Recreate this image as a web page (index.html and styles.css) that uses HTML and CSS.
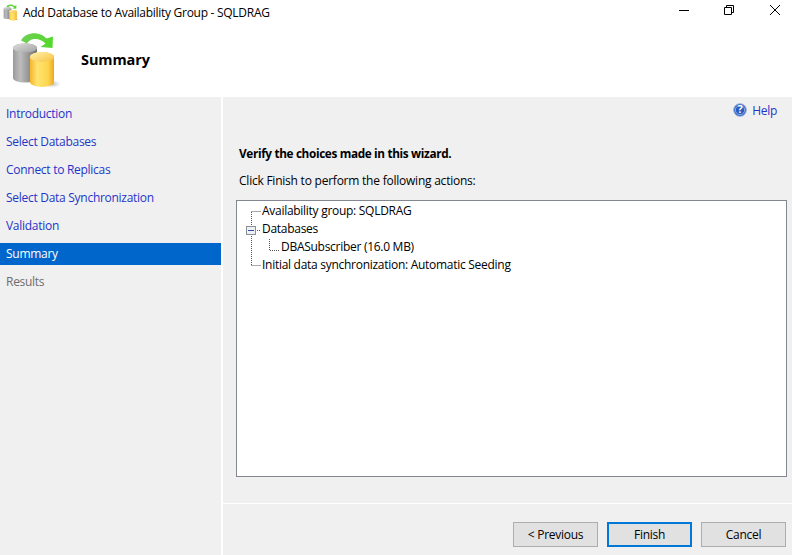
FILE: index.html
```html
<!DOCTYPE html>
<html lang="en">
<head>
<meta charset="utf-8">
<title>Add Database to Availability Group - SQLDRAG</title>
<link rel="stylesheet" href="styles.css">
</head>
<body>
<div class="window">
  <div class="titlebar">
    <svg class="title-icon" width="16" height="17" viewBox="0 0 16 17">
      <use href="#dbicon" width="16" height="17"/>
    </svg>
    <span class="title-text">Add Database to Availability Group - SQLDRAG</span>
    <div class="controls">
      <svg class="ctl" width="46" height="21" viewBox="0 0 46 21"><path d="M18 10.500h10" stroke="#000" fill="none"/></svg>
      <svg class="ctl" width="45" height="21" viewBox="0 0 45 21"><path d="M17.500 7.500h7v7h-7zM19.500 7.500v-2h7v7h-2" stroke="#000" fill="none"/></svg>
      <svg class="ctl" width="40" height="21" viewBox="0 0 40 21"><path d="M18 5l10 10M28 5L18 15" stroke="#000" fill="none"/></svg>
    </div>
  </div>
  <div class="header">
    <svg class="header-icon" width="56" height="65" viewBox="0 0 56 65">
      <defs>
        <linearGradient id="grey" x1="0" x2="1" y1="0" y2="0">
          <stop offset="0" stop-color="#9a9a9a"/><stop offset=".3" stop-color="#bdbdbd"/><stop offset="1" stop-color="#6e6e6e"/>
        </linearGradient>
        <linearGradient id="greyTop" x1="0" x2="1" y1="0" y2="1">
          <stop offset="0" stop-color="#dcdcdc"/><stop offset="1" stop-color="#a2a2a2"/>
        </linearGradient>
        <linearGradient id="yel" x1="0" x2="1" y1="0" y2="0">
          <stop offset="0" stop-color="#f4b52c"/><stop offset=".3" stop-color="#ffe470"/><stop offset=".75" stop-color="#fdd54e"/><stop offset="1" stop-color="#eda81f"/>
        </linearGradient>
        <linearGradient id="yelTop" x1="0" x2="1" y1="0" y2="1">
          <stop offset="0" stop-color="#fff1b0"/><stop offset="1" stop-color="#f8c23c"/>
        </linearGradient>
        <linearGradient id="grn" x1="0" x2="1" y1="0" y2="0">
          <stop offset="0" stop-color="#6fce55"/><stop offset="1" stop-color="#53d92a"/>
        </linearGradient>
        <radialGradient id="shadow">
          <stop offset="0" stop-color="#999" stop-opacity=".7"/><stop offset="1" stop-color="#bbb" stop-opacity="0"/>
        </radialGradient>
        <symbol id="dbicon" viewBox="11 32 50 57" preserveAspectRatio="none">
          <ellipse cx="52" cy="84" rx="9" ry="4" fill="url(#shadow)"/>
          <path d="M13 48a12 4.500 0 0 1 24 0v30a12 4.500 0 0 1-24 0z" fill="url(#grey)"/>
          <ellipse cx="25" cy="48" rx="12" ry="4.500" fill="url(#greyTop)"/>
          <path d="M30 57a12 5 0 0 1 24 0v25a12 5 0 0 1-24 0z" fill="url(#yel)"/>
          <ellipse cx="42" cy="57" rx="12" ry="5" fill="url(#yelTop)"/>
          <path d="M21 40.500C24 35 31 32.500 37 33.500C41 34 44 36 46.500 38.500L53 36.500L52.500 48L40.500 47L45.500 43.500C42 40 38 38.500 34 39C31 39.500 28.500 41 27 43.500z" fill="url(#grn)"/>
        </symbol>
      </defs>
      <use href="#dbicon" x="3" y="4" width="50" height="57"/>
    </svg>
    <h1 class="page-title">Summary</h1>
  </div>
  <div class="wizard">
    <nav class="sidebar">
      <a class="step">Introduction</a>
      <a class="step">Select Databases</a>
      <a class="step">Connect to Replicas</a>
      <a class="step">Select Data Synchronization</a>
      <a class="step">Validation</a>
      <a class="step active">Summary</a>
      <a class="step disabled">Results</a>
    </nav>
    <main class="main">
      <div class="help-row">
        <svg class="help-icon" width="14" height="14" viewBox="0 0 15 15">
          <circle cx="7.500" cy="7.500" r="6.800" fill="#2f62c4" stroke="#9db4dd"/>
          <circle cx="7.500" cy="7.500" r="5" fill="#2a5cc0" stroke="#dbe6f7" stroke-width=".6"/>
          <text x="7.500" y="11" class="help-q">?</text>
        </svg>
        <a class="help-link">Help</a>
      </div>
      <div class="content">
        <p class="verify">Verify the choices made in this wizard.</p>
        <p class="click">Click Finish to perform the following actions:</p>
        <div class="tree">
          <svg class="tree-lines" width="60" height="80" viewBox="0 0 60 80">
            <path d="M14.500 11v54M14.500 10.500h9M20 29.500h4M32.500 38v11.500h10M14.500 64.500h9" stroke="#555" stroke-dasharray="1 1" fill="none"/>
            <rect x="9.500" y="25.500" width="9" height="8" fill="#eef0f6" stroke="#8a8f99"/>
            <path d="M11 29.500h6" stroke="#2b4ea0"/>
          </svg>
          <div class="node">Availability group: SQLDRAG</div>
          <div class="node">Databases</div>
          <div class="node child">DBASubscriber (16.0 MB)</div>
          <div class="node">Initial data synchronization: Automatic Seeding</div>
        </div>
      </div>
      <div class="footer">
        <button class="btn">&lt; Previous</button>
        <button class="btn primary">Finish</button>
        <button class="btn">Cancel</button>
      </div>
    </main>
  </div>
</div>
</body>
</html>
```
FILE: styles.css
```css
* { box-sizing: border-box; }
html, body { margin: 0; padding: 0; }
body {
  font-family: "Open Sans", "Noto Sans", "Liberation Sans", sans-serif;
  font-size: 12px;
  letter-spacing: -0.28px;
  color: #000;
  background: #fff;
}
.window {
  width: 792px;
  height: 555px;
  display: flex;
  flex-direction: column;
  overflow: hidden;
}
.titlebar {
  height: 24px;
  display: flex;
  align-items: center;
  padding-left: 3px;
  flex: none;
}
.title-icon { flex: none; margin-right: 4px; }
.title-text { flex: 1; white-space: nowrap; }
.controls { display: flex; align-self: flex-start; }
.ctl { display: block; }
.header {
  height: 73px;
  flex: none;
  display: flex;
  align-items: center;
}
.header-icon { flex: none; margin: 0 17px 0 8px; }
.page-title { margin: 0; font-size: 14.500px; font-weight: 700; position: relative; top: -1px; letter-spacing: -0.1px; }
.wizard { flex: 1; display: flex; min-height: 0; }
.sidebar {
  width: 221px;
  flex: none;
  margin-right: 2px;
  background: #f0f0f0;
  padding-top: 6px;
  display: flex;
  flex-direction: column;
  gap: 6px;
}
.step {
  height: 22px;
  line-height: 22px;
  padding-left: 6px;
  color: #1f35c8;
}
.step.active { background: #0066cc; color: #fff; }
.step.disabled { color: #6d6d6d; }
.main {
  flex: 1;
  background: #f0f0f0;
  display: flex;
  flex-direction: column;
  min-width: 0;
}
.help-row {
  height: 26px;
  flex: none;
  display: flex;
  justify-content: flex-end;
  align-items: center;
  gap: 5px;
  padding-right: 15px;
}
.help-icon { display: block; }
.help-q { font-size: 11px; font-weight: 700; fill: #fff; text-anchor: middle; }
.help-link { color: #1f35c8; }
.content { flex: 1; padding: 0 5px 0 16px; min-height: 0; }
.verify { margin: 22px 0 0; line-height: 16px; font-size: 11.800px; font-weight: 700; letter-spacing: -0.36px; }
.click { margin: 12px 0 0; line-height: 16px; letter-spacing: -0.23px; }
.tree {
  position: relative;
  height: 277px;
  margin-top: 11px;
  margin-left: -3px;
  background: #fff;
  border: 1px solid #828790;
  padding-top: 1px;
}
.tree-lines { position: absolute; left: 0; top: 0; }
.node { height: 18px; line-height: 18px; padding-left: 25px; position: relative; }
.node.child { padding-left: 44px; }
.footer {
  height: 52px;
  flex: none;
  border-top: 1px solid #fff;
  display: flex;
  justify-content: flex-end;
  gap: 9px;
  padding: 18px 6px 0 0;
}
.btn {
  width: 85px;
  height: 25px;
  font: inherit;
  letter-spacing: inherit;
  color: #000;
  background: #e1e1e1;
  border: 1px solid #adadad;
  padding: 0;
}
.btn.primary { border: 2px solid #0078d7; }
```
